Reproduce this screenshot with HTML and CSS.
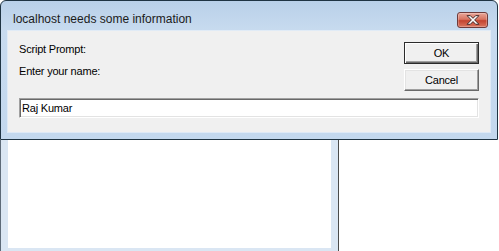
FILE: index.html
```html
<!DOCTYPE html>
<html>
<head>
  <title>localhost needs some information</title>
  <link rel="stylesheet" href="styles.css">
</head>
<body>
  <div class="dialog">
    <div class="titlebar">
      <span class="title">localhost needs some information</span>
      <button class="close" title="Close">
        <svg width="14" height="11" viewBox="0 0 13 10">
          <path d="M1 0.5h3l2.5 2.5L9 0.5h3L8 4.5l4 4h-3L6.5 6 4 8.5H1l4-4z" fill="#fff" stroke="#3d2626" stroke-width="0.9" stroke-linejoin="round"/>
        </svg>
      </button>
    </div>
    <div class="client">
      <div class="top">
        <div class="labels">
          <div class="label">Script Prompt:</div>
          <div class="label">Enter your name:</div>
        </div>
        <div class="buttons">
          <button class="btn default">OK</button>
          <button class="btn">Cancel</button>
        </div>
      </div>
      <input class="field" type="text" value="Raj Kumar">
    </div>
  </div>

  <div class="backdrop">
    <div class="pane">
      <div class="pane-inner"></div>
    </div>
  </div>
</body>
</html>
```

FILE: styles.css
```css
body {
  margin: 0;
  background: #fff;
  font-family: "Liberation Sans", Arial, sans-serif;
}

.dialog {
  width: 498px;
  height: 140px;
  box-sizing: border-box;
  border: 1px solid #1f3443;
  border-radius: 6px 6px 0 0;
  padding: 0 7px 7px 7px;
  background: linear-gradient(#b9d0e9, #c8dbef 30px, #c3d8ee);
}

.titlebar {
  height: 30px;
  display: flex;
  align-items: flex-start;
  justify-content: space-between;
}

.title {
  margin: 10px 0 0 5px;
  font-family: "Liberation Sans", Arial, sans-serif;
  font-size: 12px;
  line-height: 16px;
  color: #1b1b1b;
}

.close {
  width: 31px;
  height: 16px;
  margin: 11px 2px 0 0;
  padding: 0;
  border: 1px solid #6e3b3b;
  border-radius: 3px;
  background: linear-gradient(#e8a699, #d87461 45%, #c3432f 55%, #da7660);
  display: flex;
  align-items: center;
  justify-content: center;
  box-shadow: inset 0 0 0 1px rgba(255, 255, 255, 0.25);
}

.close svg {
  display: block;
}

.client {
  height: 101px;
  box-sizing: border-box;
  padding: 11px;
  background: #f0f0f0;
  box-shadow: 0 0 0 1px rgba(255, 255, 255, 0.45);
}

.top {
  display: flex;
  justify-content: space-between;
}

.labels {
  display: flex;
  flex-direction: column;
  gap: 8px;
}

.label {
  font-size: 11px;
  line-height: 14px;
  letter-spacing: -0.2px;
  color: #000;
}

.buttons {
  display: flex;
  flex-direction: column;
  gap: 5px;
}

.btn {
  width: 75px;
  height: 22px;
  padding: 0;
  font-family: "Liberation Sans", Arial, sans-serif;
  font-size: 11px;
  letter-spacing: -0.2px;
  color: #000;
  background: #f0f0f0;
  border: 1px solid;
  border-color: #fff #696969 #696969 #fff;
  box-shadow: inset -1px -1px 0 #a0a0a0, inset 1px 1px 0 #e3e3e3;
}

.btn.default {
  border: 1px solid #2b2b2b;
  box-shadow: inset 1px 1px 0 #fff, inset -1px -1px 0 #696969, inset -2px -2px 0 #a0a0a0;
}

.field {
  display: block;
  width: 100%;
  height: 20px;
  margin-top: 7px;
  box-sizing: border-box;
  padding: 0 0 0 2px;
  font-family: "Liberation Sans", Arial, sans-serif;
  font-size: 11px;
  letter-spacing: -0.2px;
  color: #000;
  background: #fff;
  border: 1px solid;
  border-color: #a0a0a0 #fff #fff #a0a0a0;
  box-shadow: inset 1px 1px 0 #696969, inset -1px -1px 0 #e3e3e3;
  outline: none;
}

.backdrop {
  display: flex;
  height: 111px;
}

.pane {
  width: 339px;
  box-sizing: border-box;
  display: flex;
  border-left: 1px solid #5d6a78;
  border-right: 1px solid #4b4b4b;
  padding: 0 7px 3px 7px;
  background: #dae6f3;
}

.pane-inner {
  flex: 1;
  background: #fff;
}
```
